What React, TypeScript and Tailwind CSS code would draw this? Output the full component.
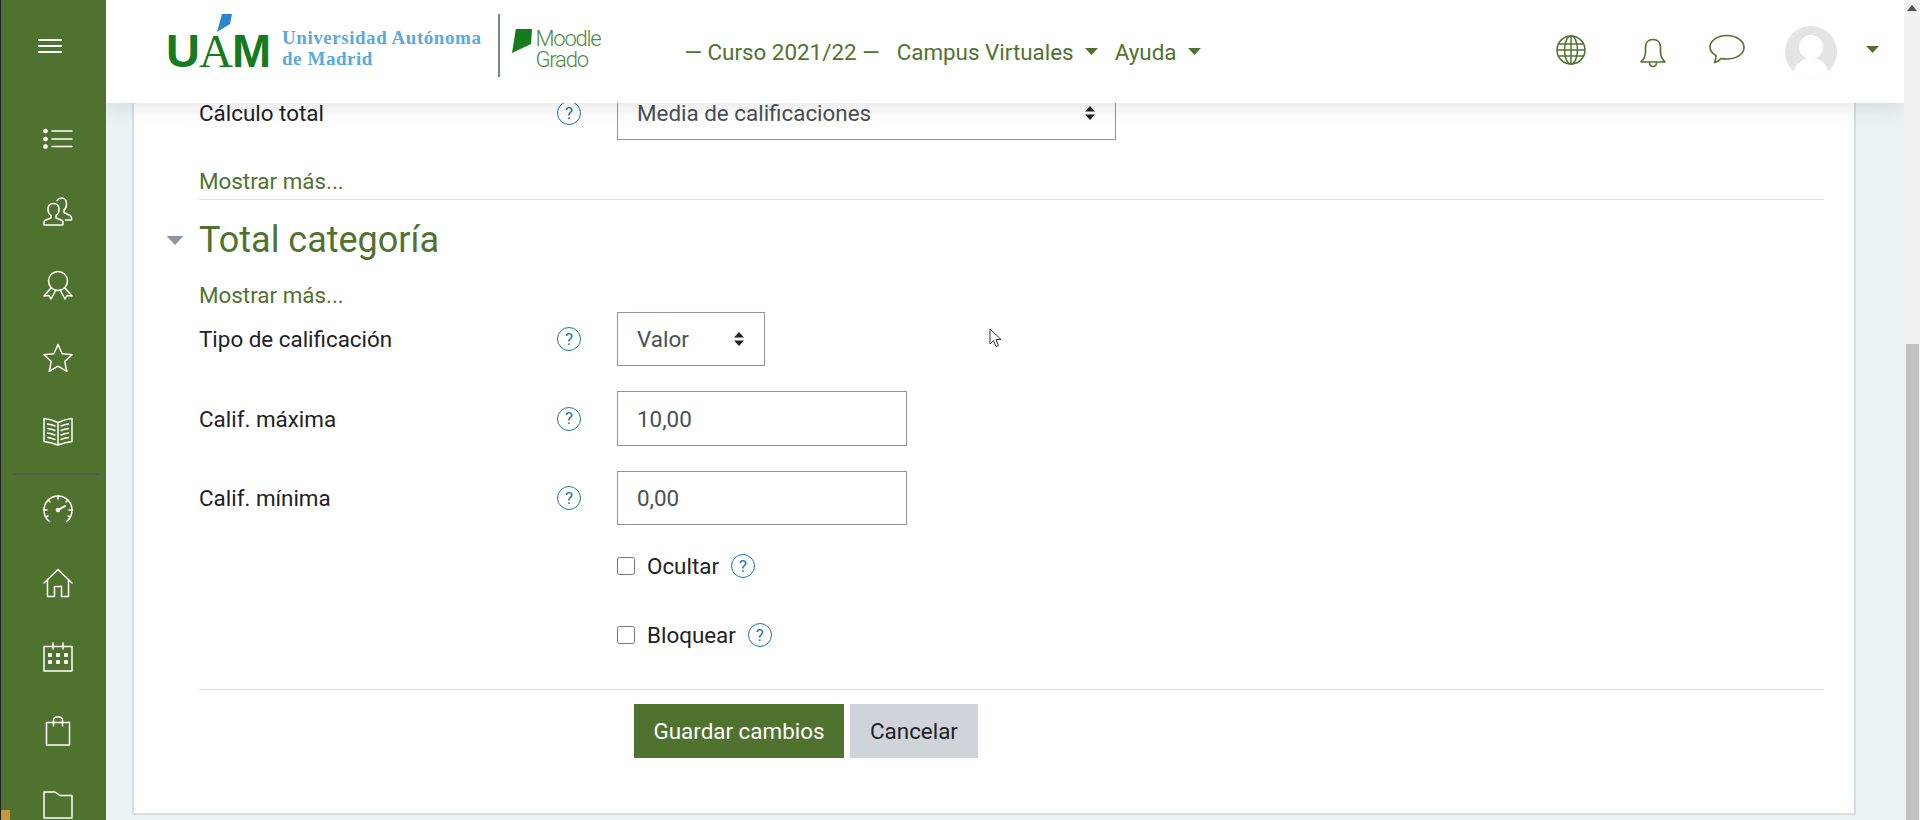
import React from 'react';

const green = '#4f732f';

const SideIcon: React.FC<{ children: React.ReactNode }> = ({ children }) => (
  <svg viewBox="0 0 30 30" width="30" height="30" fill="none" stroke="#fff" strokeWidth="1.5" strokeLinecap="round" strokeLinejoin="round">
    {children}
  </svg>
);

const topIcons = [
  <SideIcon key="list">
    <path d="M9 7h20M9 15h20M9 22.5h20" />
    <rect x="1" y="5.500" width="3" height="3" rx="1" fill="#fff" />
    <rect x="1" y="13.500" width="3" height="3" rx="1" fill="#fff" />
    <rect x="1" y="21" width="3" height="3" rx="1" fill="#fff" />
  </SideIcon>,
  <SideIcon key="users">
    <path d="M1 28v-2.500c0-1.500 1-2.300 2.500-2.800l4.500-1.700v-2.500c-2-1.500-3-3.500-3-6 0-3.800 2.200-6 5.500-6s5.500 2.200 5.500 6c0 2.500-1 4.500-3 6V21l4.500 1.700c1.500.5 2.500 1.300 2.500 2.800V28z" />
    <path d="M14 3.500c1-1.500 2.500-2.500 4.500-2.500 3.300 0 5 2.300 5 6 0 2.500-.5 4.500-2.500 6v2.500l6 3c1 .5 1.500 1.300 1.500 2.200v2.300h-6" />
  </SideIcon>,
  <SideIcon key="award">
    <circle cx="15" cy="11" r="9.500" />
    <path d="M8 18l-7 8 5-.5 2 3.500 5-9M22 18l7 8-5-.5-2 3.500-5-9" />
  </SideIcon>,
  <SideIcon key="star">
    <path d="M15 1.500l4.200 9.300 9.800 1-7.300 6.700 2.100 9.800-8.800-5.100-8.800 5.100 2.100-9.800L1 11.800l9.800-1z" />
  </SideIcon>,
  <SideIcon key="book">
    <path d="M15 6.500C11 4.500 6 3 1 2.500v23c5 .5 10 2 14 3.500 4-1.500 9-3 14-3.500v-23c-5 .5-10 2-14 4zM15 6.500V29" />
    <path d="M4.500 8c2.500.4 5 1 7.500 2M4.500 12.500c2.500.4 5 1 7.500 2M4.500 17c2.500.4 5 1 7.500 2M4.500 21.500c2.500.4 5 1 7.500 2M25.500 8c-2.500.4-5 1-7.500 2M25.500 12.500c-2.500.4-5 1-7.500 2M25.500 17c-2.500.4-5 1-7.500 2M25.500 21.500c-2.500.4-5 1-7.500 2" />
  </SideIcon>,
];

const bottomIcons = [
  <SideIcon key="gauge">
    <path d="M6.500 27.500C3 25 1 20.500 1 16 1 8.300 7.300 2 15 2s14 6.300 14 14c0 4.500-2 9-5.500 11.500" />
    <path d="M15 2v3M5 6l2 2M25 6l-2 2M1 16h3M29 16h-3M3 23l2-1M27 23l-2-1" />
    <circle cx="15" cy="16" r="1.500" fill="#fff" />
    <path d="M15 16l7-4" strokeWidth="2" />
  </SideIcon>,
  <SideIcon key="home">
    <path d="M1 15L15 1.500 29 15M4.500 12v16.500h7V18.500h7v10h7V12" />
  </SideIcon>,
  <SideIcon key="calendar">
    <path d="M1 4.500h28v24.500H1zM10 1v6M20 1v6" />
    <g fill="#fff" stroke="none">
      <rect x="5" y="11" width="4" height="4" rx="1" />
      <rect x="13" y="11" width="4" height="4" rx="1" />
      <rect x="21" y="11" width="4" height="4" rx="1" />
      <rect x="5" y="18" width="4" height="4" rx="1" />
      <rect x="13" y="18" width="4" height="4" rx="1" />
      <rect x="21" y="18" width="4" height="4" rx="1" />
    </g>
  </SideIcon>,
  <SideIcon key="bag">
    <path d="M3.500 6.500h23v22.500h-23zM10.500 10V4.500C10.500 2.500 12 1 14 1h2c2 0 3.500 1.500 3.500 3.500V10" />
  </SideIcon>,
  <SideIcon key="folder">
    <path d="M1 2h11l5 3.500h12V28H1z" />
  </SideIcon>,
];

const Caret: React.FC<{ color?: string; w?: number; h?: number }> = ({ color = green, w = 13, h = 7 }) => (
  <svg width={w} height={h} viewBox="0 0 13 7" className="block">
    <path d="M0 0h13L6.500 7z" fill={color} />
  </svg>
);

const UpDown = () => (
  <svg width="12" height="14" viewBox="0 0 12 14" fill="#212529">
    <path d="M6 0l5 5.500H1zM6 14L1 8.500h10z" />
  </svg>
);

const Help = () => (
  <span className="flex h-6 w-6 shrink-0 items-center justify-center rounded-full border-[1.5px] border-[#1877a8] text-[17px] leading-none text-[#1877a8]">
    ?
  </span>
);

const FakeSelect: React.FC<{ value: string; className: string }> = ({ value, className }) => (
  <div className={`flex h-[54px] items-center justify-between border border-[#8f959e] bg-white pl-[19px] pr-[19px] text-[#495057] ${className}`}>
    <span>{value}</span>
    <UpDown />
  </div>
);

const Row: React.FC<{ label: string; className?: string; children: React.ReactNode }> = ({ label, className = '', children }) => (
  <div className={`flex items-center ${className}`}>
    <span className="w-[358px] text-[#1d2125]">{label}</span>
    <Help />
    <div className="ml-[36px]">{children}</div>
  </div>
);

const Check: React.FC<{ label: string; className?: string }> = ({ label, className = '' }) => (
  <div className={`ml-[418px] flex h-[30px] items-center ${className}`}>
    <input type="checkbox" className="m-0 h-[18px] w-[18px]" />
    <span className="ml-3 mr-3 text-[#1d2125]">{label}</span>
    <Help />
  </div>
);

export default function App() {
  return (
    <div className="flex h-[820px] w-[1920px] overflow-hidden bg-[#eaf2f5] font-['Roboto',sans-serif] text-[22.4px] leading-[30px]">
      <aside className="relative z-20 flex h-[820px] w-[106px] shrink-0 flex-col items-center overflow-hidden border-l border-[#1d2125] bg-[#4f732f]">
        <div className="mr-[7px] mt-[37px] flex h-[26px] w-6 flex-col justify-between py-[2px]">
          <span className="h-[2px] w-full bg-white" />
          <span className="h-[2px] w-full bg-white" />
          <span className="h-[2px] w-full bg-white" />
        </div>
        <div className="ml-[9px] mt-[69px] flex flex-col gap-[43px]">{topIcons}</div>
        <div className="ml-[5px] mt-[27px] h-[4px] w-[86px] bg-[#4e5f58]" />
        <div className="ml-[9px] mt-[19px] flex flex-col gap-[44px]">{bottomIcons}</div>
        <div className="absolute bottom-0 left-[-1px] h-[10px] w-[10px] bg-[#c8963e]" />
      </aside>

      <div className="flex h-[820px] min-w-0 flex-1 flex-col">
        <header className="relative z-10 flex h-[103px] shrink-0 items-center bg-white pl-[60px] text-[#4f732f] shadow-[0_2px_22px_rgba(0,0,0,0.12)]">
          <div className="relative -mt-[10px] flex h-[62px] w-[106px] items-end">
            <svg className="absolute left-[51px] top-[-2px]" width="15" height="18" viewBox="0 0 15 18">
              <path d="M5 0h10l-2 10L0 18z" fill="#2a87cf" />
            </svg>
            <span className="font-['Liberation_Sans',sans-serif] text-[47px] font-bold leading-[54px] tracking-[-1px] text-[#167a1f]">U</span>
            <span className="font-['Liberation_Serif',serif] text-[47px] leading-[54px] tracking-[-1px] text-[#167a1f]">A</span>
            <span className="font-['Liberation_Sans',sans-serif] text-[47px] font-bold leading-[54px] text-[#167a1f]">M</span>
          </div>
          <div className="-mt-[8px] ml-[10px] font-['Liberation_Serif',serif] text-[19px] font-bold leading-[21px] tracking-[0.55px] text-[#5aa9e0]">
            <div>Universidad Autónoma</div>
            <div>de Madrid</div>
          </div>
          <div className="ml-[17px] mt-[14px] h-[63px] w-[2px] self-start bg-[#7d8580]" />
          <svg className="ml-[12px] mt-[29px] self-start" width="20" height="24" viewBox="0 0 21 27" preserveAspectRatio="none">
            <path d="M4 0h17l-1 17L0 27z" fill="#167a1f" />
          </svg>
          <div className="ml-[3px] mt-[28px] w-[70px] self-start text-[22px] font-light leading-[21px] tracking-[-1.2px] text-[#4f8a42]">
            <div>Moodle</div>
            <div>Grado</div>
          </div>
          <span className="ml-[79px]">— Curso 2021/22 —</span>
          <span className="ml-[17px]">Campus Virtuales</span>
          <span className="ml-[11px]"><Caret /></span>
          <span className="ml-[17px]">Ayuda</span>
          <span className="ml-[12px]"><Caret /></span>

          <div className="ml-auto flex items-center pr-[25px]">
            <svg className="-mt-[3px]" width="30" height="30" viewBox="0 0 30 30" fill="none" stroke={green} strokeWidth="1.5">
              <circle cx="15" cy="15" r="14" />
              <ellipse cx="15" cy="15" rx="6.500" ry="14" />
              <path d="M15 1v28M2.500 9h25M1 15h28M2.500 21h25" />
            </svg>
            <svg className="ml-[54px] mt-[2px]" width="26" height="30" viewBox="0 0 26 30" fill="none" stroke={green} strokeWidth="1.600" strokeLinejoin="round">
              <path d="M1 24c3-3 4.500-5 4.500-10V9.500C5.500 4.500 8.500 1.500 13 1.500s7.500 3 7.500 8V14c0 5 1.500 7 4.500 10z" />
              <path d="M9.500 24.500c0 2.500 1.500 4 3.500 4s3.500-1.500 3.500-4" />
            </svg>
            <svg className="ml-[43px] mt-[-6px]" width="36" height="30" viewBox="0 0 36 30" fill="none" stroke={green} strokeWidth="1.600" strokeLinejoin="round">
              <path d="M18 1.500C8.500 1.500 1 6.500 1 13c0 3.500 2 6.500 6 8.500 0 2.500-.5 5-1.500 7 2.500-.5 5-2 6.500-4 2 .5 4 .5 6 .5 9.500 0 17-5 17-11.500S27.500 1.500 18 1.500z" />
            </svg>
            <div className="relative ml-[40px] mt-[1px] h-[52px] w-[52px] overflow-hidden rounded-full bg-[#e3e5e5]">
              <div className="absolute left-[14px] top-[9px] h-[24px] w-[24px] rounded-full bg-white" />
              <div className="absolute left-[8px] top-[32px] h-[30px] w-[36px] rounded-t-full bg-white" />
            </div>
            <span className="ml-[29px] mt-[-5px]"><Caret /></span>
          </div>
        </header>

        <main className="min-h-0 flex-1 overflow-hidden pl-[26px] pr-[48px]">
          <section className="-mt-[17px] h-[729px] border-b-2 border-l-2 border-r-2 border-[#d8dde2] bg-white pl-[65px] pr-[30px]">
            <Row label="Cálculo total">
              <FakeSelect value="Media de calificaciones" className="w-[499px]" />
            </Row>
            <div className="mt-[26px] text-[#4f732f]">Mostrar más...</div>
            <div className="mt-[3px] h-px bg-[#dee2e6]" />
            <div className="relative mt-[21px] flex h-[38px] items-center">
              <span className="absolute left-[-33px] top-[15px]"><Caret color="#8f959e" w={18} h={9} /></span>
              <h2 className="text-[36px] leading-[38px] text-[#4f732f]">Total categoría</h2>
            </div>
            <div className="mt-[21px] text-[#4f732f]">Mostrar más...</div>
            <Row label="Tipo de calificación" className="mt-[2px]">
              <FakeSelect value="Valor" className="w-[148px]" />
            </Row>
            <Row label="Calif. máxima" className="mt-[25px]">
              <input readOnly value="10,00" className="h-[55px] w-[290px] border border-[#8f959e] bg-white px-[19px] text-[#495057] outline-none" />
            </Row>
            <Row label="Calif. mínima" className="mt-[25px]">
              <input readOnly value="0,00" className="h-[54px] w-[290px] border border-[#8f959e] bg-white px-[19px] text-[#495057] outline-none" />
            </Row>
            <Check label="Ocultar" className="mt-[26px]" />
            <Check label="Bloquear" className="mt-[39px]" />
            <div className="mt-[39px] h-px bg-[#dee2e6]" />
            <div className="ml-[435px] mt-[14px] flex gap-[6px]">
              <button className="h-[54px] w-[210px] bg-[#4f732f] text-white">Guardar cambios</button>
              <button className="h-[54px] w-[128px] bg-[#ced4da] text-[#1d2125]">Cancelar</button>
            </div>
          </section>
        </main>
      </div>

      <div className="relative z-20 flex h-[820px] w-4 shrink-0 flex-col items-end bg-[#f1f1f1]">
        <svg className="mr-[3px] mt-[5px]" width="10" height="6" viewBox="0 0 10 6">
          <path d="M5 0l5 6H0z" fill="#505050" />
        </svg>
        <div className="mr-px mt-[333px] w-[13px] flex-1 bg-[#c1c1c1]" />
      </div>

      <svg className="absolute left-[989px] top-[328px] z-30" width="14" height="21" viewBox="0 0 14 21">
        <path d="M1 1v15l3.500-3.500 2.500 6 2.500-1-2.500-6h5z" fill="#fff" stroke="#333" strokeWidth="1" />
      </svg>
    </div>
  );
}
